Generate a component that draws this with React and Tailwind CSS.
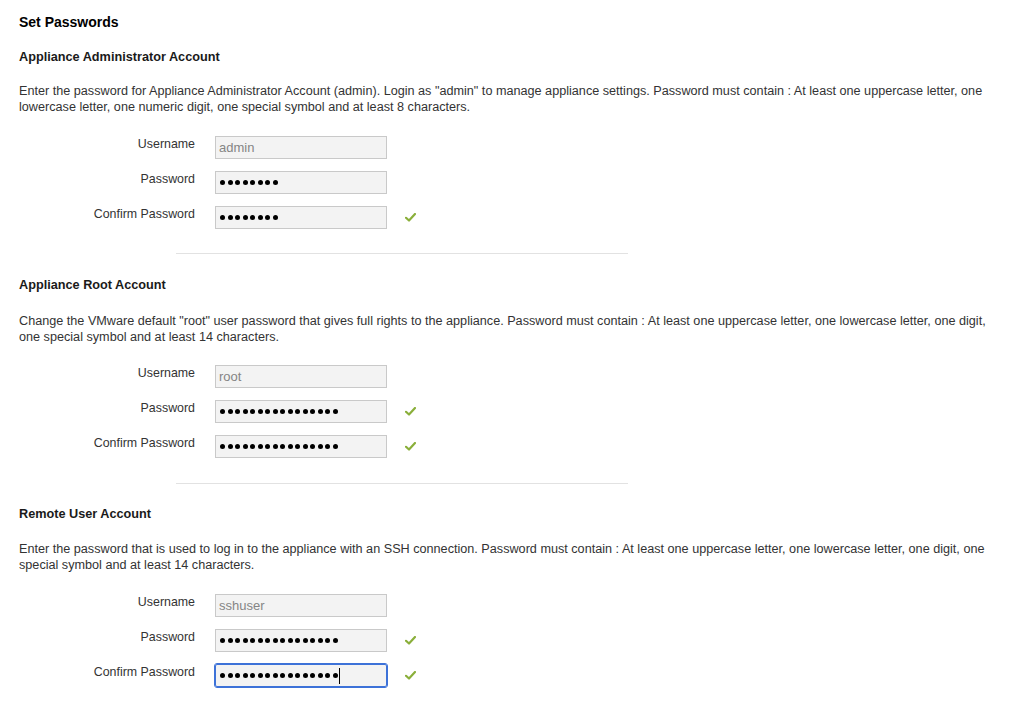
import React from "react";

function Check() {
  return (
    <svg width="11" height="9" viewBox="0 0 11 9" className="ml-[18px] mt-[7px]">
      <path d="M1 4.8 L4 7.5 L10 1" fill="none" stroke="#8aaf3a" strokeWidth="2.2" strokeLinecap="round" strokeLinejoin="round" />
    </svg>
  );
}

function Dots({ n, caret }) {
  return (
    <div className="flex items-center gap-[2.5px] h-full pl-[4px]">
      {Array.from({ length: n }).map((_, i) => (
        <span key={i} className="block w-[5px] h-[5px] rounded-full bg-black" />
      ))}
      {caret && <span className="block w-px h-[16px] bg-black ml-[-1px]" />}
    </div>
  );
}

function Row({ label, children, check, focused }) {
  return (
    <div className="flex items-start h-[23px]">
      <div className="w-[196px] text-right pr-[20px] mt-[0px] text-[12.4px] leading-[16px] text-[#333]">{label}</div>
      <div
        className={
          "w-[172px] h-[23px] bg-[#f3f3f3] border " +
          (focused
            ? "border-[#3d72d8] outline-1 outline-[#3d72d8] rounded-[2px]"
            : "border-[#c9c9c9]")
        }
      >
        {children}
      </div>
      {check && <Check />}
    </div>
  );
}

function Section({ title, desc1, desc2, user, n1, n2, c1, c2, focusLast, headMt, descMt, formMt }) {
  return (
    <div className="flex flex-col">
      <div className={"font-bold text-[12.7px] leading-[16px] text-[#1a1a1a] " + headMt}>{title}</div>
      <div className={"text-[12.65px] leading-[16px] text-[#333] whitespace-nowrap " + descMt}>
        {desc1}
        <br />
        {desc2}
      </div>
      <div className={"flex flex-col gap-[12px] " + formMt}>
        <Row label="Username">
          <div className="pl-[3px] leading-[21px] text-[13px] text-[#858585]">{user}</div>
        </Row>
        <Row label="Password" check={c1}>
          <Dots n={n1} />
        </Row>
        <Row label="Confirm Password" check={c2} focused={focusLast}>
          <Dots n={n2} caret={focusLast} />
        </Row>
      </div>
    </div>
  );
}

export default function App() {
  return (
    <div
      className="w-[1024px] h-[717px] bg-white pl-[19px] pt-[14px] text-[12px] overflow-hidden"
      style={{ fontFamily: '"Liberation Sans", Arial, sans-serif' }}
    >
      <div className="font-bold text-[14px] leading-[16px] text-black">Set Passwords</div>
      <Section
        title="Appliance Administrator Account"
        desc1={'Enter the password for Appliance Administrator Account (admin). Login as "admin" to manage appliance settings. Password must contain : At least one uppercase letter, one'}
        desc2="lowercase letter, one numeric digit, one special symbol and at least 8 characters."
        user="admin"
        n1={8}
        n2={8}
        c1={false}
        c2={true}
        headMt="mt-[19px]"
        descMt="mt-[18px]"
        formMt="mt-[21px]"
      />
      <div className="ml-[157px] w-[452px] h-px bg-[#e2e2e2] mt-[24px]" />
      <Section
        title="Appliance Root Account"
        desc1={'Change the VMware default "root" user password that gives full rights to the appliance. Password must contain : At least one uppercase letter, one lowercase letter, one digit,'}
        desc2="one special symbol and at least 14 characters."
        user="root"
        n1={16}
        n2={16}
        c1={true}
        c2={true}
        headMt="mt-[23px]"
        descMt="mt-[20px]"
        formMt="mt-[20px]"
      />
      <div className="ml-[157px] w-[452px] h-px bg-[#e2e2e2] mt-[25px]" />
      <Section
        title="Remote User Account"
        desc1="Enter the password that is used to log in to the appliance with an SSH connection. Password must contain : At least one uppercase letter, one lowercase letter, one digit, one"
        desc2="special symbol and at least 14 characters."
        user="sshuser"
        n1={16}
        n2={16}
        c1={true}
        c2={true}
        focusLast
        headMt="mt-[22px]"
        descMt="mt-[19px]"
        formMt="mt-[21px]"
      />
    </div>
  );
}
